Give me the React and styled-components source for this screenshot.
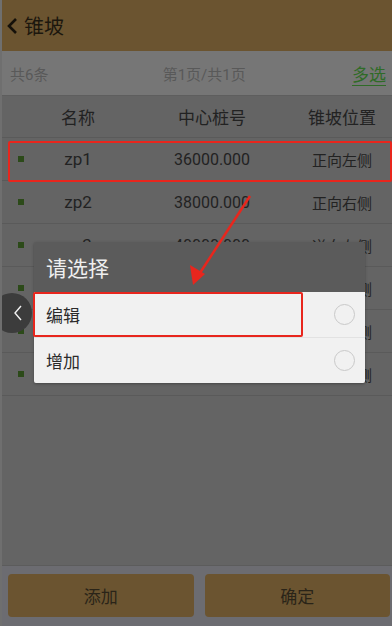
import React from 'react';
import styled, {createGlobalStyle} from 'styled-components';

const GlobalStyle = createGlobalStyle`
  html, body {
    margin: 0;
    padding: 0;
    background: #666666;
  }
  body {
    font-family: Roboto, "Noto Sans CJK SC", sans-serif;
  }
`;

const rows = [
  {name: 'zp1', station: '36000.000', side: '正向左侧'},
  {name: 'zp2', station: '38000.000', side: '正向右侧'},
  {name: 'zp3', station: '40000.000', side: '逆向左侧'},
  {name: 'zp4', station: '42000.000', side: '逆向右侧'},
  {name: 'zp5', station: '44000.000', side: '正向右侧'},
  {name: 'zp6', station: '46000.000', side: '逆向左侧'}
];

const Page = styled.div`
  position: relative;
  width: 392px;
  height: 626px;
  overflow: hidden;
  display: flex;
  flex-direction: column;
  background: #646464;
  border-left: 2px solid #6f6f6f;
  box-sizing: border-box;
`;

const Header = styled.div`
  height: 51px;
  flex: none;
  display: flex;
  align-items: center;
  gap: 6px;
  padding-left: 4px;
  background: #6b5430;
  color: #1c170e;
  font-size: 20px;
`;

const InfoBar = styled.div`
  height: 45px;
  flex: none;
  display: flex;
  align-items: center;
  justify-content: space-between;
  padding: 0 6px 0 8px;
  background: #767676;
  border-bottom: 1px solid #5e5e5e;
  box-sizing: border-box;
  font-size: 15px;
  color: #595959;
`;

const Multi = styled.span`
  color: #2f6b27;
  font-size: 17px;
  text-decoration: underline;
  text-underline-offset: 4px;
`;

const PageInfo = styled.span`
  margin-left: 8px;
`;

const Row = styled.div`
  height: ${p => (p.$head ? 42 : 43)}px;
  flex: none;
  display: grid;
  grid-template-columns: 26px 100px 168px 1fr;
  align-items: center;
  border-bottom: 1px solid #5a5a5a;
  box-sizing: border-box;
  padding-right: 4px;
  color: #222;
  font-size: ${p => (p.$head ? 17 : 16)}px;
`;

const Cell = styled.div`
  text-align: center;
  white-space: nowrap;
  font-size: ${p => p.$size || 'inherit'};
`;

const Marker = styled.span`
  justify-self: end;
  width: 6px;
  height: 6px;
  margin-right: 4px;
  background: #2c4a19;
`;

const Filler = styled.div`
  flex: 1;
`;

const BottomBar = styled.div`
  height: 61px;
  flex: none;
  display: grid;
  grid-template-columns: 1fr 1fr;
  gap: 11px;
  padding: 8px 2px 9px 6px;
  box-sizing: border-box;
  background: #6c6c71;
  border-top: 1px solid #5c5c5c;
`;

const Button = styled.div`
  display: flex;
  align-items: center;
  justify-content: center;
  border-radius: 4px;
  background: #6b5430;
  color: #2a2418;
  font-size: 17px;
`;

const Dialog = styled.div`
  position: absolute;
  left: 32px;
  top: 242px;
  width: 331px;
  border-radius: 2px;
  overflow: hidden;
  box-shadow: 0 1px 3px rgba(0, 0, 0, 0.3);
`;

const DialogTitle = styled.div`
  height: 50px;
  display: flex;
  align-items: center;
  padding-left: 12px;
  background: #5b5b5b;
  color: #efefef;
  font-size: 21px;
`;

const Option = styled.div`
  height: 45px;
  display: flex;
  align-items: center;
  justify-content: space-between;
  padding: 0 10px 0 12px;
  background: #f1f1f1;
  border-top: ${p => (p.$sep ? '1px solid #e2e2e2' : 'none')};
  color: #2b2b2b;
  font-size: 17px;
`;

const Radio = styled.span`
  width: 19px;
  height: 19px;
  border-radius: 50%;
  border: 1px solid #c9c9c9;
`;

const SideButton = styled.div`
  position: absolute;
  left: -10px;
  top: 293px;
  width: 40px;
  height: 40px;
  border-radius: 50%;
  background: #3c3c3c;
  display: flex;
  align-items: center;
  justify-content: flex-end;
  padding-right: 9px;
  box-sizing: border-box;
`;

const Highlight = styled.div`
  position: absolute;
  left: ${p => p.$x}px;
  top: ${p => p.$y}px;
  width: ${p => p.$w}px;
  height: ${p => p.$h}px;
  border: 2px solid #e8261d;
  border-radius: 2px;
  box-sizing: border-box;
  pointer-events: none;
`;

const ArrowLayer = styled.svg`
  position: absolute;
  left: 0;
  top: 0;
  pointer-events: none;
`;

const Chevron = () => (
  <svg width="12" height="18" viewBox="0 0 12 18">
    <path d="M10 2 L3 9 L10 16" fill="none" stroke="#15110a" strokeWidth="2.6" />
  </svg>
);

export default function App() {
  return (
    <>
      <GlobalStyle />
      <Page>
        <Header>
          <Chevron />
          <span>锥坡</span>
        </Header>
        <InfoBar>
          <span>共6条</span>
          <PageInfo>第1页/共1页</PageInfo>
          <Multi>多选</Multi>
        </InfoBar>
        <Row $head>
          <span />
          <Cell>名称</Cell>
          <Cell>中心桩号</Cell>
          <Cell>锥坡位置</Cell>
        </Row>
        {rows.map(r => (
          <Row key={r.name}>
            <Marker />
            <Cell $size="17px">{r.name}</Cell>
            <Cell $size="16px">{r.station}</Cell>
            <Cell $size="15px">{r.side}</Cell>
          </Row>
        ))}
        <Filler />
        <BottomBar>
          <Button>添加</Button>
          <Button>确定</Button>
        </BottomBar>

        <Dialog>
          <DialogTitle>请选择</DialogTitle>
          <Option>
            <span>编辑</span>
            <Radio />
          </Option>
          <Option $sep>
            <span>增加</span>
            <Radio />
          </Option>
        </Dialog>

        <SideButton>
          <svg width="10" height="18" viewBox="0 0 10 18">
            <path d="M8 2 L2 9 L8 16" fill="none" stroke="#f2f2f2" strokeWidth="1.4" />
          </svg>
        </SideButton>

        <Highlight $x={6} $y={141} $w={384} $h={41} />
        <Highlight $x={31} $y={292} $w={270} $h={45} />

        <ArrowLayer width="392" height="626">
          <line x1="248" y1="196" x2="196" y2="276" stroke="#e8261d" strokeWidth="2.5" />
          <path d="M191 285 L188 265 L203 274 Z" fill="#e8261d" />
        </ArrowLayer>
      </Page>
    </>
  );
}
